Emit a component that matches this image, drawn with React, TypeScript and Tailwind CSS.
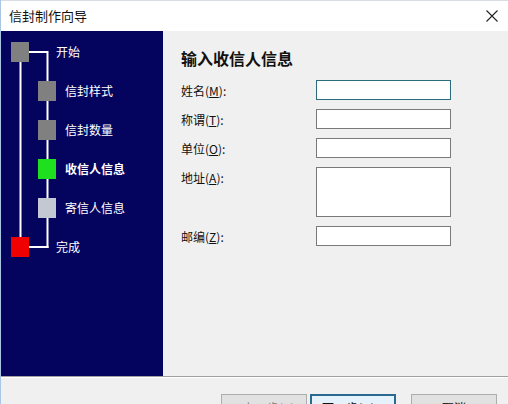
import React from 'react';

const FONT = { fontFamily: '"Noto Sans CJK SC", "Noto Sans", sans-serif' };

interface Step {
  label: string;
  level: 0 | 1;
  color: string;
  bold?: boolean;
}

const steps: Step[] = [
  { label: '开始', level: 0, color: 'bg-[#808080]' },
  { label: '信封样式', level: 1, color: 'bg-[#808080]' },
  { label: '信封数量', level: 1, color: 'bg-[#808080]' },
  { label: '收信人信息', level: 1, color: 'bg-[#1ee01e]', bold: true },
  { label: '寄信人信息', level: 1, color: 'bg-[#c4c8d2]' },
  { label: '完成', level: 0, color: 'bg-[#f00000]' },
];

function Mnemonic({ text, letter }: { text: string; letter: string }) {
  return (
    <span>
      {text}(<span className="underline">{letter}</span>):
    </span>
  );
}

function StepTree() {
  return (
    <div className="relative w-[162px] h-full bg-[#04045e] pt-[1px]">
      <svg className="absolute inset-0" width="162" height="345">
        <line x1="19.5" y1="29" x2="19.5" y2="206" stroke="#ffffff" strokeWidth="2" />
        <line x1="27" y1="21" x2="46.5" y2="21" stroke="#ffffff" strokeWidth="2" />
        <line x1="46.5" y1="20" x2="46.5" y2="217" stroke="#ffffff" strokeWidth="2" />
        <line x1="27" y1="216" x2="47.5" y2="216" stroke="#ffffff" strokeWidth="2" />
      </svg>
      {steps.map((s) => (
        <div key={s.label} className="relative flex items-center h-[39px]">
          <div
            className={`${s.color} w-[18px] h-[20px] ${s.level === 0 ? 'ml-[10px]' : 'ml-[37px]'}`}
          />
          <span
            className={`text-white text-[12px] leading-none ${s.level === 0 ? 'ml-[27px]' : 'ml-[9px]'} ${s.bold ? 'font-bold' : ''}`}
          >
            {s.label}
          </span>
        </div>
      ))}
    </div>
  );
}

function Field({ label, letter, tall, focused }: { label: string; letter: string; tall?: boolean; focused?: boolean }) {
  return (
    <div className="flex">
      <div className="w-[135px] pt-[3px] text-[12px] leading-[16px] text-[#111]">
        <Mnemonic text={label} letter={letter} />
      </div>
      <div
        className={`w-[135px] ${tall ? 'h-[50px]' : 'h-[20px]'} bg-white border ${focused ? 'border-[#2b6d7c]' : 'border-[#7a7a7a]'}`}
      />
    </div>
  );
}

export default function App() {
  return (
    <div className="w-[508px] h-[404px] bg-[#f0f0f0] flex flex-col overflow-hidden border-l border-[#a9c6e4]" style={FONT}>
      <div className="h-[31px] bg-white flex items-center justify-between pl-[8px] pr-[8px] shrink-0 border-t border-[#d8dde4]">
        <span className="text-[13px] text-[#111]">信封制作向导</span>
        <svg width="14" height="14" viewBox="0 0 14 14" className="mr-[1px]">
          <path d="M1.5 1.5 L12.5 12.5 M12.5 1.5 L1.5 12.5" stroke="#222" strokeWidth="1.1" />
        </svg>
      </div>
      <div className="flex h-[345px] shrink-0">
        <StepTree />
        <div className="flex-1 bg-[#f0f0f0] pl-[18px] pt-[16px]">
          <div className="text-[16px] leading-[22px] font-bold text-[#111] mb-[11px]">输入收信人信息</div>
          <div className="flex flex-col gap-[9px]">
            <Field label="姓名" letter="M" focused />
            <Field label="称谓" letter="T" />
            <Field label="单位" letter="O" />
            <Field label="地址" letter="A" tall />
            <Field label="邮编" letter="Z" />
          </div>
        </div>
      </div>
      <div className="h-[1px] bg-[#a0a0a0] shrink-0" />
      <div className="h-[1px] bg-white shrink-0" />
      <div className="flex pl-[220px] pt-[16px] gap-[3px]">
        <button className="w-[86px] h-[23px] pt-[5px] bg-[#e1e1e1] border border-[#adadad] text-[12px] leading-[16px] text-[#838383] shrink-0 flex justify-center items-start">
          &lt; 上一步(B)
        </button>
        <button className="w-[86px] h-[23px] pt-[4px] bg-[#e5f1fb] border-2 border-[#2a6a90] text-[12px] leading-[16px] text-[#111] shrink-0 flex justify-center items-start">
          下一步(N) &gt;
        </button>
        <button className="w-[86px] h-[23px] pt-[5px] bg-[#e1e1e1] border border-[#adadad] text-[12px] leading-[16px] text-[#111] ml-[12px] shrink-0 flex justify-center items-start">
          取消
        </button>
      </div>
    </div>
  );
}
